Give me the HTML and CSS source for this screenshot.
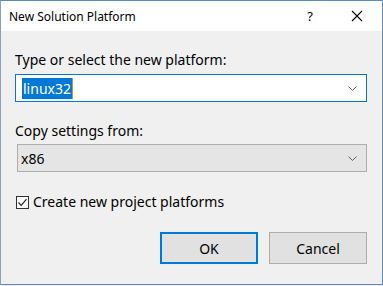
FILE: index.html
```html
<!DOCTYPE html>
<html lang="en">
<head>
    <meta charset="UTF-8">
    <title>New Solution Platform</title>
    <link rel="stylesheet" href="styles.css">
</head>
<body>
    <div class="window">
        <div class="titlebar">
            <span class="title">New Solution Platform</span>
            <span class="help">?</span>
            <svg class="close" width="12" height="12" viewBox="0 0 12 12">
                <path d="M1 1 L11 11 M11 1 L1 11" stroke="#000" stroke-width="1.1" fill="none"/>
            </svg>
        </div>
        <div class="content">
            <label class="label">Type or select the new platform:</label>
            <div class="combo combo-edit">
                <span class="value"><span class="selected">linux32</span><span class="caret"></span></span>
                <svg class="chevron" width="9" height="5" viewBox="0 0 9 5">
                    <path d="M0.5 0.5 L4.5 4.5 L8.5 0.5" stroke="#606060" stroke-width="1" fill="none"/>
                </svg>
            </div>

            <label class="label second">Copy settings from:</label>
            <div class="combo combo-list">
                <span class="value">x86</span>
                <svg class="chevron" width="9" height="5" viewBox="0 0 9 5">
                    <path d="M0.5 0.5 L4.5 4.5 L8.5 0.5" stroke="#606060" stroke-width="1" fill="none"/>
                </svg>
            </div>

            <div class="check-row">
                <span class="checkbox">
                    <svg width="11" height="11" viewBox="0 0 11 11">
                        <path d="M1.5 5.5 L4.2 8.3 L9.5 2.2" stroke="#222" stroke-width="1.2" fill="none"/>
                    </svg>
                </span>
                <span>Create new project platforms</span>
            </div>

            <div class="buttons">
                <button class="btn btn-default">OK</button>
                <button class="btn">Cancel</button>
            </div>
        </div>
    </div>
</body>
</html>
```

FILE: styles.css
```css
body {
    margin: 0;
    background-color: #e9eef4;
    font-family: "Noto Sans", "Liberation Sans", sans-serif;
    color: #000;
}
.window {
    width: 383px;
    height: 285px;
    box-sizing: border-box;
    border: 1px solid #5b8ac0;
    border-left-color: #8aa0b8;
    background-color: #f0f0f0;
}
.titlebar {
    height: 30px;
    background-color: #fff;
    display: flex;
    align-items: center;
    padding-left: 8px;
    font-size: 12px;
}
.title {
    flex: 1;
}
.help {
    font-size: 13px;
    margin-right: 38px;
}
.close {
    margin-right: 19px;
}
.content {
    padding: 19px 15px 0 14px;
    font-size: 14px;
}
.label {
    display: block;
    line-height: 20px;
    margin-bottom: 4px;
}
.label.second {
    margin-top: 19px;
    margin-bottom: 3px;
}
.combo {
    height: 28px;
    box-sizing: border-box;
    display: flex;
    align-items: center;
    justify-content: space-between;
    padding: 0 9px 0 6px;
}
.combo-edit {
    background-color: #fff;
    border: 1px solid #0078d7;
}
.combo-list {
    margin-left: 2px;
    background-color: #e5e5e5;
    border: 1px solid #adadad;
    padding-left: 3px;
}
.value {
    display: flex;
    align-items: center;
}
.selected {
    background-color: #0078d7;
    color: #fff;
    line-height: 21px;
    padding: 0 1px;
}
.caret {
    width: 1px;
    height: 21px;
    background-color: #e08a2c;
}
.check-row {
    display: flex;
    align-items: center;
    gap: 4px;
    margin-top: 20px;
    line-height: 20px;
    margin-left: 1px;
}
.checkbox {
    width: 13px;
    height: 13px;
    box-sizing: border-box;
    border: 1px solid #333;
    background-color: #fff;
    display: flex;
    align-items: center;
    justify-content: center;
}
.buttons {
    display: flex;
    justify-content: flex-end;
    gap: 11px;
    margin-top: 20px;
}
.btn {
    width: 98px;
    height: 32px;
    box-sizing: border-box;
    font-family: inherit;
    font-size: 14px;
    background-color: #e1e1e1;
    border: 1px solid #adadad;
    padding: 0;
    color: #000;
}
.btn-default {
    border: 2px solid #0078d7;
}
```
